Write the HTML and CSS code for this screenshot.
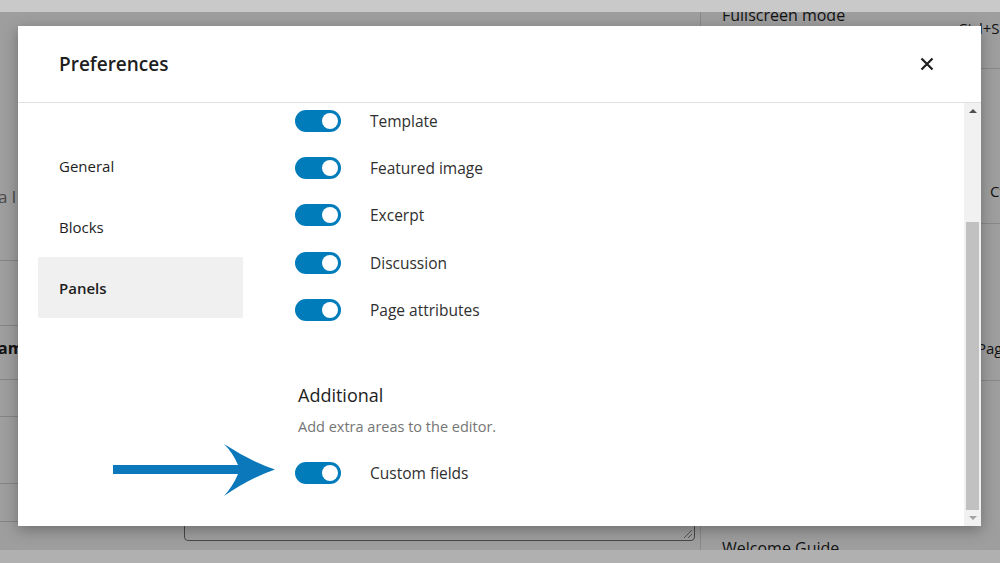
FILE: index.html
```html
<!DOCTYPE html>
<html lang="en">
<head>
    <meta charset="UTF-8">
    <meta name="viewport" content="width=device-width, initial-scale=1.0">
    <title>Preferences</title>
    <link rel="stylesheet" href="styles.css">
</head>
<body>
    <div class="frame">
        <div class="letterbox"></div>

        <div class="stage">
            <!-- Editor behind the modal -->
            <div class="editor">
                <div class="editor-main">
                    <div class="post-table">
                        <div class="post-row row-a"><span class="placeholder">a l</span></div>
                        <div class="post-row row-b"></div>
                        <div class="post-row row-c"><span class="row-bold">am</span></div>
                        <div class="post-row row-d"></div>
                        <div class="post-row row-e"></div>
                        <div class="post-row row-f"></div>
                    </div>
                    <div class="excerpt-box"><span class="resize"></span></div>
                </div>
                <div class="editor-menu">
                    <div class="menu-group group-a">
                        <span class="menu-item first">Fullscreen mode</span>
                        <span class="menu-shortcut">Ctrl+Shift+F</span>
                    </div>
                    <div class="menu-group group-b"><span class="menu-shortcut">Ctrl+Alt</span></div>
                    <div class="menu-group group-c"><span class="menu-shortcut wide">Page</span></div>
                    <div class="menu-group group-d"><span class="menu-item">Welcome Guide</span></div>
                </div>
            </div>

            <!-- Modal layer -->
            <div class="overlay">
                <div class="modal">
                    <div class="modal-header">
                        <h1>Preferences</h1>
                        <button class="close-button" aria-label="Close">
                            <svg width="24" height="24" viewBox="0 0 24 24"><path d="M6.5 6.5l11 11M17.5 6.5l-11 11" stroke="#1e1e1e" stroke-width="2.2" fill="none"/></svg>
                        </button>
                    </div>
                    <div class="modal-body">
                        <nav class="tabs">
                            <div class="tab">General</div>
                            <div class="tab">Blocks</div>
                            <div class="tab active">Panels</div>
                        </nav>
                        <div class="panel">
                            <div class="panel-list">
                                <div class="option"><span class="toggle"></span><span class="option-label">Template</span></div>
                                <div class="option"><span class="toggle"></span><span class="option-label">Featured image</span></div>
                                <div class="option"><span class="toggle"></span><span class="option-label">Excerpt</span></div>
                                <div class="option"><span class="toggle"></span><span class="option-label">Discussion</span></div>
                                <div class="option"><span class="toggle"></span><span class="option-label">Page attributes</span></div>

                                <div class="section">
                                    <h2>Additional</h2>
                                    <p>Add extra areas to the editor.</p>
                                </div>
                                <div class="option"><span class="toggle"></span><span class="option-label">Custom fields</span></div>
                            </div>
                        </div>
                        <div class="scrollbar">
                            <span class="scroll-arrow up"></span>
                            <div class="scroll-track"><div class="scroll-thumb"></div></div>
                            <span class="scroll-arrow down"></span>
                        </div>
                    </div>
                </div>

                <!-- Annotation arrow -->
                <svg class="pointer" width="175" height="60" viewBox="105 440 175 60">
                    <path d="M113 465 H238 Q233 453 224 444 Q250 461 275 469.5 Q250 478 224 496 Q233 486 238 474 H113 Z" fill="#0b78bb"/>
                </svg>
            </div>
        </div>

        <div class="letterbox bottom"></div>
    </div>
</body>
</html>
```

FILE: styles.css
```css
* {
    box-sizing: border-box;
}
body {
    margin: 0;
    font-family: 'Open Sans', 'Noto Sans', sans-serif;
    color: #1e1e1e;
    background-color: #9e9e9e;
    overflow: hidden;
}
.frame {
    display: flex;
    flex-direction: column;
    width: 1000px;
    height: 563px;
}
.letterbox {
    height: 12px;
    background-color: #c9c9c9;
}
.letterbox.bottom {
    height: 13px;
    background-color: #b0b0b0;
}
.stage {
    position: relative;
    flex: 1;
    overflow: hidden;
}

/* editor behind the overlay */
.editor {
    display: grid;
    grid-template-columns: 700px 300px;
    height: 100%;
    background-color: #fff;
}
.editor-main {
    display: grid;
    grid-template-columns: 184px 511px;
    align-items: end;
}
.post-table {
    align-self: start;
    display: flex;
    flex-direction: column;
}
.post-row {
    display: flex;
    align-items: center;
    border-bottom: 1px solid #d6d6d6;
    font-size: 16px;
}
.row-a { height: 249px; align-items: flex-end; padding-bottom: 52px; }
.row-b { height: 65px; }
.row-c { height: 54px; padding-bottom: 10px; }
.row-d { height: 37px; }
.row-e { height: 67px; }
.row-f { height: 38px; }
.placeholder {
    color: #777;
    font-size: 17px;
    margin-left: -2px;
}
.row-bold {
    font-weight: 700;
    color: #1e1e1e;
    margin-left: -2px;
}
.excerpt-box {
    position: relative;
    height: 60px;
    margin-bottom: 9px;
    border: 1px solid #757575;
    border-radius: 4px;
}
.resize {
    position: absolute;
    right: 2px;
    bottom: 2px;
    width: 8px;
    height: 8px;
    background: linear-gradient(135deg, transparent 45%, #888 45%, #888 55%, transparent 55%, transparent 70%, #888 70%, #888 80%, transparent 80%);
}
.editor-menu {
    display: flex;
    flex-direction: column;
    border-left: 1px solid #ddd;
    color: #1e1e1e;
    font-size: 16px;
}
.menu-group {
    display: flex;
    flex-direction: column;
    border-bottom: 1px solid #ddd;
}
.menu-item {
    padding-left: 21px;
}
.menu-item.first {
    margin-top: -8px;
}
.menu-shortcut {
    padding-left: 257px;
    white-space: nowrap;
    font-size: 15px;
}
.group-a .menu-shortcut {
    margin-top: -8px;
}
.menu-shortcut.wide {
    padding-left: 276px;
}
.group-a { height: 57px; }
.group-b { height: 155px; justify-content: flex-end; padding-bottom: 22px; }
.group-b .menu-shortcut { padding-left: 289px; }
.group-c { height: 157px; justify-content: flex-end; padding-bottom: 22px; }
.group-d { flex: 1; border-bottom: none; justify-content: flex-end; margin-bottom: -9px; }

.overlay {
    position: absolute;
    inset: 0;
    display: flex;
    padding: 14px 19px 24px 18px;
    background-color: rgba(0, 0, 0, 0.38);
}

/* modal */
.modal {
    display: flex;
    flex-direction: column;
    flex: 1;
    background-color: #fff;
    box-shadow: 0 4px 14px rgba(0, 0, 0, 0.3);
}
.modal-header {
    display: flex;
    align-items: center;
    justify-content: space-between;
    height: 77px;
    padding: 0 42px 0 41px;
    border-bottom: 1px solid #e0e0e0;
}
.modal-header h1 {
    margin: 0;
    font-size: 19px;
    font-weight: 600;
    color: #1e1e1e;
}
.close-button {
    display: flex;
    padding: 0;
    border: none;
    background: none;
    cursor: pointer;
}
.modal-body {
    display: flex;
    flex: 1;
    overflow: hidden;
}
.tabs {
    width: 225px;
    padding: 32px 0 0 20px;
}
.tab {
    display: flex;
    align-items: center;
    height: 61px;
    padding-left: 21px;
    border-radius: 2px;
    font-size: 15px;
    color: #1e1e1e;
}
.tab.active {
    background-color: #f0f0f0;
    font-weight: 600;
}
.panel {
    flex: 1;
    overflow: hidden;
    padding-left: 52px;
}
.panel-list {
    margin-top: -6px;
}
.option {
    display: flex;
    align-items: center;
    height: 47.3px;
}
.toggle {
    position: relative;
    width: 46px;
    height: 22px;
    border-radius: 11px;
    background-color: #007cba;
}
.toggle::after {
    content: "";
    position: absolute;
    top: 3px;
    right: 3px;
    width: 16px;
    height: 16px;
    border-radius: 50%;
    background-color: #fff;
}
.option-label {
    margin-left: 29px;
    font-size: 15.5px;
    color: #2f2f2f;
}
.section {
    padding: 50px 0 12px 3px;
}
.section h2 {
    margin: 0;
    height: 24px;
    line-height: 24px;
    font-size: 18px;
    font-weight: 500;
    color: #1e1e1e;
}
.section p {
    margin: 10px 0 0;
    line-height: 20px;
    font-size: 14.5px;
    color: #757575;
}

/* fake scrollbar */
.scrollbar {
    display: flex;
    flex-direction: column;
    width: 17px;
    background-color: #f1f1f1;
}
.scroll-arrow {
    display: flex;
    justify-content: center;
    align-items: center;
    height: 17px;
}
.scroll-arrow::before {
    content: "";
    border-left: 4px solid transparent;
    border-right: 4px solid transparent;
}
.scroll-arrow.up::before {
    border-bottom: 4px solid #505050;
}
.scroll-arrow.down::before {
    border-top: 4px solid #a3a3a3;
}
.scroll-track {
    flex: 1;
    padding: 102px 2px 0;
}
.scroll-thumb {
    height: 288px;
    background-color: #c1c1c1;
}

.pointer {
    position: absolute;
    left: 105px;
    top: 428px;
}
```
